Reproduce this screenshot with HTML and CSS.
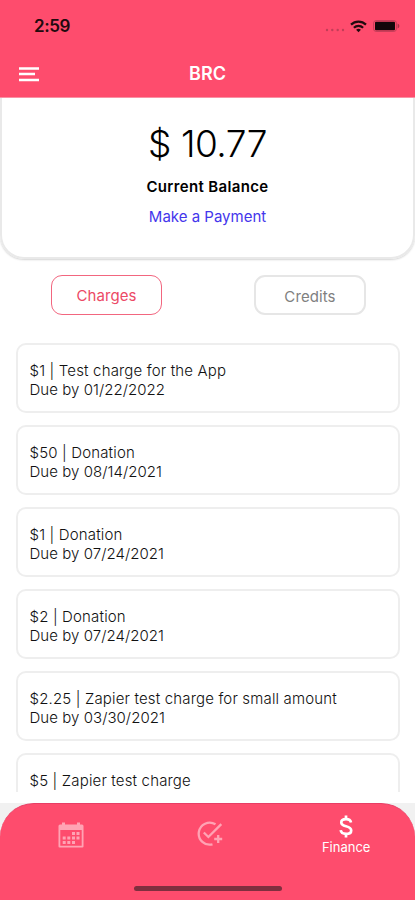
FILE: index.html
```html
<!DOCTYPE html>
<html lang="en">
<head>
<meta charset="utf-8">
<title>BRC Finance</title>
<link rel="stylesheet" href="styles.css">
</head>
<body>
<div class="app">
  <header class="header">
    <div class="status">
      <span class="time">2:59</span>
      <div class="status-icons">
        <svg width="20" height="4" viewBox="0 0 20 4" fill="#c23d58"><circle cx="2" cy="2" r="1.2"/><circle cx="7.3" cy="2" r="1.2"/><circle cx="12.7" cy="2" r="1.2"/><circle cx="18" cy="2" r="1.2"/></svg>
        <svg class="wifi" width="17" height="13" viewBox="0 0 17 13" fill="none" stroke="#210a0e" stroke-width="2.2"><path d="M1 4.6a10.8 10.8 0 0 1 15 0"/><path d="M3.9 7.7a6.6 6.6 0 0 1 9.2 0"/><path d="M8.500 12.200L6.100 9.800a3.500 3.500 0 0 1 4.800 0z" fill="#210a0e" stroke="none"/></svg>
        <svg class="battery" width="27" height="12" viewBox="0 0 27 12"><rect x=".6" y=".6" width="22.8" height="10.8" rx="2.5" fill="none" stroke="#c23d58"/><rect x="2" y="1.700" width="20" height="8.600" rx="1" fill="#12060a"/><path d="M24.600 3.500v5q1.800-.8 1.800-2.500t-1.800-2.500z" fill="#a5344a"/></svg>
      </div>
    </div>
    <div class="bar">
      <svg class="menu" width="20" height="15" viewBox="0 0 20 15" stroke="#fff" stroke-width="2.300"><path d="M0 1.500h20M0 7h16M0 13h20"/></svg>
      <h1 class="title">BRC</h1>
    </div>
  </header>
  <section class="balance">
    <div class="amount">$ 10.77</div>
    <div class="label">Current Balance</div>
    <a class="pay">Make a Payment</a>
  </section>
  <div class="tabs">
    <div class="tab tab-active">Charges</div>
    <div class="tab">Credits</div>
  </div>
  <main class="list">
    <article class="card"><p class="desc">$1 | Test charge for the App</p><p>Due by 01/22/2022</p></article>
    <article class="card"><p class="desc">$50 | Donation</p><p>Due by 08/14/2021</p></article>
    <article class="card"><p class="desc">$1 | Donation</p><p>Due by 07/24/2021</p></article>
    <article class="card"><p class="desc">$2 | Donation</p><p>Due by 07/24/2021</p></article>
    <article class="card"><p class="desc">$2.25 | Zapier test charge for small amount</p><p>Due by 03/30/2021</p></article>
    <article class="card"><p class="desc">$5 | Zapier test charge</p></article>
  </main>
  <div class="nav-wrap">
    <nav class="nav">
      <div class="nav-items">
        <div class="nav-item">
          <svg width="26" height="26" viewBox="0 0 26 26"><path fill="#ffa3b4" fill-rule="evenodd" d="M2 2.500h2V.5h3v2h12V.5h3v2h2q1.500 0 1.500 1.500v20.500q0 1-1 1H1.500q-1 0-1-1V4q0-1.500 1.500-1.500zM2.300 8v15.700h21.400V8z"/><path fill="#ffa3b4" d="M14 10h3v3h-3zM18.500 10h3v3h-3zM4.700 14.500h3v3h-3zM9.300 14.500h3v3h-3zM14 14.500h3v3h-3zM18.500 14.500h3v3h-3zM4.700 19h3v3h-3zM9.300 19h3v3h-3zM14 19h3v3h-3z"/></svg>
        </div>
        <div class="nav-item nav-tasks">
          <svg width="26" height="26" viewBox="0 0 26 26" fill="none" stroke="#ffa3b4" stroke-width="2.300"><path d="M18.500 3.300A11 11 0 1 0 15.500 23.300"/><path d="M6.800 11.500l4.600 4.500L24.300 3.100"/><path d="M21.200 14v8M17.200 18h8"/></svg>
        </div>
        <div class="nav-item nav-active">
          <svg width="14" height="23" viewBox="0 0 14 23" fill="none" stroke="#fff" stroke-width="2.700"><path d="M12 7.400C11.600 5.300 9.800 4.200 7 4.200c-2.900 0-4.700 1.300-4.700 3.300 0 2.300 1.900 3 4.700 3.700 3.200.8 5.200 1.700 5.200 4.200 0 2.200-2 3.500-5.100 3.500-3.200 0-5.100-1.300-5.400-3.700"/><path d="M7 .5v4M7 18.500v4"/></svg>
          <span>Finance</span>
        </div>
      </div>
      <div class="home"></div>
    </nav>
  </div>
</div>
</body>
</html>
```
FILE: styles.css
```css
* { box-sizing: border-box; }
body { margin: 0; font-family: Inter, "Liberation Sans", sans-serif; background: #fff; }
svg { display: block; flex: none; }
p, h1 { margin: 0; }
.app { width: 415px; height: 900px; display: flex; flex-direction: column; overflow: hidden; }
.header { height: 98px; background: #fe4c6d; border-bottom: 1px solid #fb8ea2; flex: none; }
.status { height: 52px; padding: 0 15px 0 34px; display: flex; align-items: center; justify-content: space-between; }
.time { font-size: 17px; font-weight: 600; line-height: 20px; letter-spacing: -0.4px; color: #210a0e; }
.status-icons { display: flex; align-items: center; }
.status-icons > :first-child { margin-top: 8px; }
.wifi { margin-left: 5px; }
.battery { margin-left: 6px; }
.bar { height: 44px; display: grid; grid-template-columns: 60px 1fr 60px; align-items: center; }
.menu { margin-left: 19px; }
.title { text-align: center; color: #fff; font-size: 18px; font-weight: 600; line-height: 22px; }
.balance { height: 161px; flex: none; padding-top: 24px; border: 2px solid #e9e9e9; border-top: 0; border-radius: 0 0 24px 24px; box-shadow: 0 1px 2px #d4d4d4; display: flex; flex-direction: column; align-items: center; }
.amount { font-size: 37px; line-height: 44px; letter-spacing: -0.5px; font-weight: 300; color: #000; }
.label { margin-top: 11px; font-size: 15px; line-height: 20px; letter-spacing: 0.35px; font-weight: 600; color: #000; }
.pay { margin-top: 10px; font-size: 15px; line-height: 20px; color: #4436ec; }
.tabs { flex: none; display: flex; justify-content: space-between; padding: 16px 49px 0 51px; }
.tab { width: 112px; height: 40px; border: 2px solid #e6e6e6; border-radius: 11px; font-size: 15px; line-height: 39px; letter-spacing: 0.1px; text-align: center; color: #808080; }
.tab-active { width: 111px; border: 1px solid #f2667f; color: #ec4965; }
.list { flex: none; height: 449px; margin-top: 28px; padding: 0 15px 0 16px; overflow: hidden; display: flex; flex-direction: column; gap: 12px; }
.card { flex: none; height: 70px; padding: 16px 11.500px; border: 2px solid #eee; border-radius: 10px; font-size: 15px; line-height: 19px; font-weight: 300; letter-spacing: 0.05px; color: #111; }
.desc { letter-spacing: 0.16px; }
.nav-wrap { flex: none; margin-top: 11px; height: 97px; background: #f1f1f1; }
.nav { height: 97px; background: #fe4c6d; border-top: 1px solid #e83e65; border-radius: 34px 34px 0 0; display: flex; flex-direction: column; align-items: center; justify-content: space-between; }
.nav-items { width: 100%; height: 62px; display: grid; grid-template-columns: repeat(3, 1fr); padding: 0 0 0 2px; }
.nav-item { display: flex; flex-direction: column; align-items: center; justify-content: center; }
.nav-tasks { padding: 0 0 2px 3px; }
.nav-active { justify-content: flex-start; padding-top: 11px; color: #fff; font-size: 13px; line-height: 16px; gap: 1px; }
.home { width: 148px; height: 5px; margin-bottom: 9px; border-radius: 3px; background: #7f2f3f; }
```
